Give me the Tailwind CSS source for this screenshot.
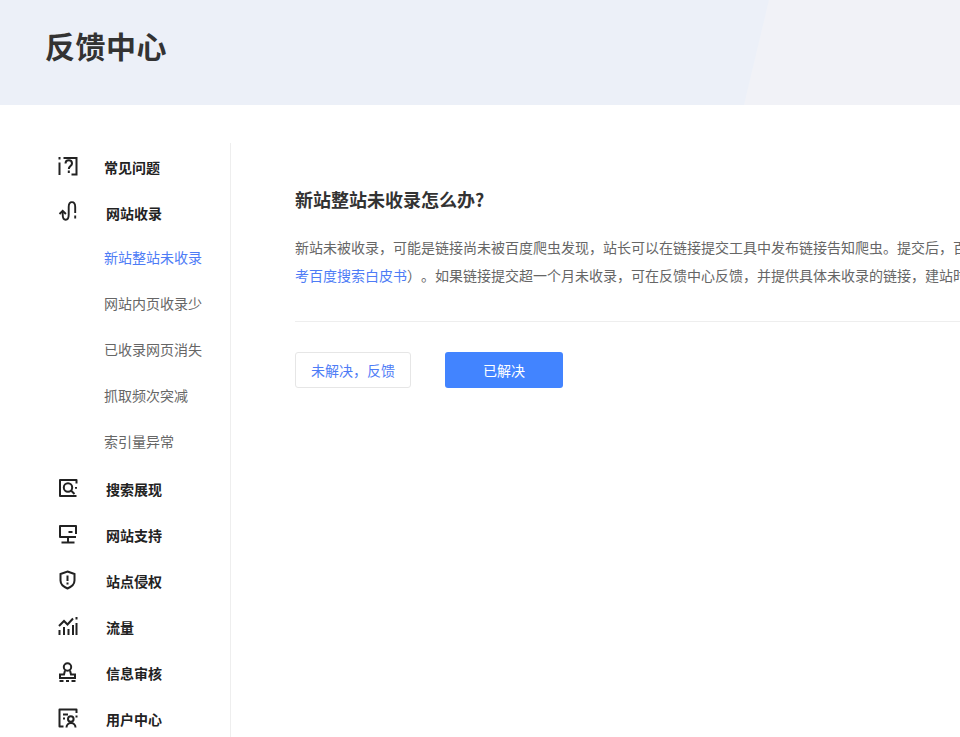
<!doctype html>
<html lang="zh-CN">
<head>
<meta charset="utf-8">
<script src="https://cdn.jsdelivr.net/npm/@tailwindcss/browser@4"></script>
</head>
<body class="h-[737px] overflow-hidden bg-white font-['Noto_Sans_CJK_SC','Noto_Sans',sans-serif] text-[#333]">
<header class="relative h-[105px] bg-[#ecf0f8]">
  <div class="absolute inset-0 bg-[#f1f2f7] [clip-path:polygon(769px_0,100%_0,100%_100%,744px_100%)]"></div>
  <h1 class="relative pl-[45px] pt-[23px] text-[30px] leading-[44px] font-bold tracking-[0.5px]">反馈中心</h1>
</header>
<div class="flex h-[632px] overflow-hidden">
  <aside class="mt-[38px] h-[594px] w-[231px] shrink-0 border-r border-[#eee] pl-[58px] text-[14px]">
    <nav class="flex flex-col">
      <a class="flex h-[46px] items-center gap-[26px] font-bold text-[#222]"><svg class="size-[20px] shrink-0" viewBox="0 0 20 20" fill="none" stroke="#222" stroke-width="2"><path d="M1.500 6.500V19M1.500 1v2.500M5.500 2H18.500V18.500H13.500"/><path d="M7.500 7.500c0-4.500 6.500-4.500 6.500 0 0 2.500-3.200 2.700-3.200 5.500M10.800 14.500v2.500"/></svg><span class="mt-[2px]">常见问题</span></a>
      <a class="flex h-[46px] items-center gap-[28px] font-bold text-[#222]"><svg class="size-[20px] shrink-0 overflow-visible" viewBox="0 0 20 20" fill="none" stroke="#222" stroke-width="1.900"><path d="M1.500 12l3.200-3.200 3.200 3.200"/><path d="M4.700 10v2.500c0 7 6 7 6 0V5c0-6.500 6.500-6.500 6.500 0v6M17.200 13.500v3"/></svg><span class="mt-[2px]">网站收录</span></a>
      <a class="flex h-[46px] items-center pb-[2px] pl-[46px] text-[#4e7cf6]">新站整站未收录</a>
      <a class="flex h-[46px] items-center pb-[2px] pl-[46px] text-[#666]">网站内页收录少</a>
      <a class="flex h-[46px] items-center pb-[2px] pl-[46px] text-[#666]">已收录网页消失</a>
      <a class="flex h-[46px] items-center pb-[2px] pl-[46px] text-[#666]">抓取频次突减</a>
      <a class="flex h-[46px] items-center pb-[2px] pl-[46px] text-[#666]">索引量异常</a>
      <a class="flex h-[46px] items-center gap-[28px] font-bold text-[#222]"><svg class="size-[20px] shrink-0" viewBox="0 0 20 20" fill="none" stroke="#222" stroke-width="2" stroke-linejoin="round"><path d="M18.500 5.500V2H2V18H18.500"/><circle cx="10" cy="9.500" r="4.200"/><path d="M13 12.500l3.500 3.500M18 9v1.800"/></svg><span class="mt-[2px]">搜索展现</span></a>
      <a class="flex h-[46px] items-center gap-[28px] font-bold text-[#222]"><svg class="size-[20px] shrink-0" viewBox="0 0 20 20" fill="none" stroke="#222" stroke-width="2" stroke-linejoin="round"><path d="M18 10V2H2V13H18"/><path d="M10 13v5M3.500 18.500h13M10.500 8h4"/></svg><span class="mt-[2px]">网站支持</span></a>
      <a class="flex h-[46px] items-center gap-[28px] font-bold text-[#222]"><svg class="size-[20px] shrink-0" viewBox="0 0 20 20" fill="none" stroke="#222" stroke-width="2"><path d="M9.500 1.500l7 2.500v6.500c0 4-3.500 6.500-7 8-3.500-1.500-7-4-7-8V4z"/><path d="M9.500 5.500v5.500M9.500 12.500v2"/></svg><span class="mt-[2px]">站点侵权</span></a>
      <a class="flex h-[46px] items-center gap-[28px] font-bold text-[#222]"><svg class="size-[20px] shrink-0" viewBox="0 0 20 20" fill="none" stroke="#222" stroke-width="2"><path d="M1 10l5-5 3.500 3.500 5.500-6"/><path d="M1.500 14v5M6 11v8M10.500 13v6M15 9v10M18.500 7v12M18.500 1v2.500"/></svg><span class="mt-[2px]">流量</span></a>
      <a class="flex h-[46px] items-center gap-[28px] font-bold text-[#222]"><svg class="size-[20px] shrink-0" viewBox="0 0 20 20" fill="none" stroke="#222" stroke-width="2"><circle cx="9.500" cy="5" r="3.700"/><path d="M7 8.500l-1 4H2v3.500h15v-3.500h-4l-1-4M1.500 19h4M8 19h3M13.500 19h4"/></svg><span class="mt-[2px]">信息审核</span></a>
      <a class="flex h-[46px] items-center gap-[28px] font-bold text-[#222]"><svg class="size-[20px] shrink-0" viewBox="0 0 20 20" fill="none" stroke="#222" stroke-width="2" stroke-linejoin="round"><path d="M5.500 18.500H1.500V1.500H18.500V5M18.500 7.500v2"/><path d="M5 6.500h5M5 10.500h2"/><circle cx="12.800" cy="11" r="2.800"/><path d="M8.500 19.500c0-6 9-6 9 0"/></svg><span class="mt-[2px]">用户中心</span></a>
    </nav>
  </aside>
  <main class="min-w-0 flex-1 overflow-hidden pl-[64px] pt-[80px]">
    <h2 class="text-[18px] leading-[28px] font-bold text-[#333]">新站整站未收录怎么办?</h2>
    <p class="mt-[20px] w-[900px] text-[14px] leading-[28px] text-[#666] [text-spacing-trim:space-all]">新站未被收录&#xFF0C;可能是链接尚未被百度爬虫发现&#xFF0C;站长可以在链接提交工具中发布链接告知爬虫&#x3002;提交后&#xFF0C;百度<br><span class="text-[#4e7cf6]">考百度搜索白皮书</span>&#xFF09;&#x3002;如果链接提交超一个月未收录&#xFF0C;可在反馈中心反馈&#xFF0C;并提供具体未收录的链接&#xFF0C;建站时</p>
    <hr class="mt-[32px] border-[#eee]">
    <div class="mt-[30px] flex gap-[34px]">
      <button class="h-[36px] w-[116px] rounded-[3px] border border-[#e6e6e6] bg-white text-[14px] text-[#4e7cf6]">未解决&#xFF0C;反馈</button>
      <button class="h-[36px] w-[118px] rounded-[3px] bg-[#4284ff] text-[14px] text-white">已解决</button>
    </div>
  </main>
</div>
</body>
</html>
